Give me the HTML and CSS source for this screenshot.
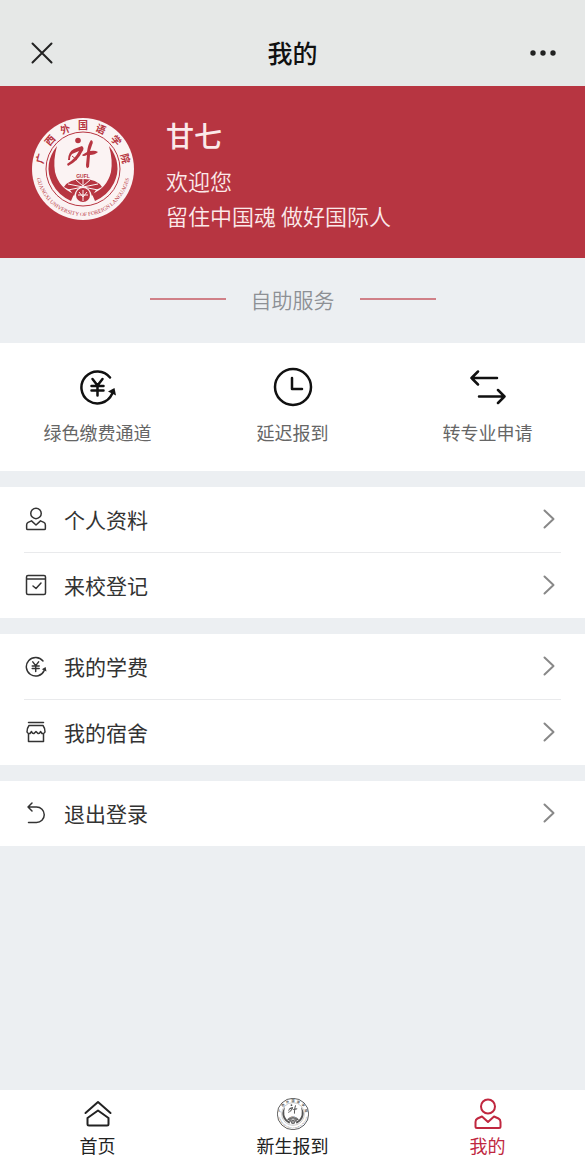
FILE: index.html
```html
<!DOCTYPE html>
<html lang="zh-CN">
<head>
<meta charset="utf-8">
<meta name="viewport" content="width=device-width, initial-scale=1">
<title>我的</title>
<link rel="stylesheet" href="styles.css">
</head>
<body>
<svg class="sprite" aria-hidden="true">
  <symbol id="person" viewBox="0 0 28 32">
    <circle cx="14" cy="8.500" r="7"/>
    <path d="M8 18.500L3.500 20.500Q1.500 21.500 1.500 24V28.500Q1.500 30 3 30H25Q26.500 30 26.500 28.500V24Q26.500 21.500 24.500 20.500L20 18.500L14 24Z"/>
  </symbol>
  <symbol id="yuan" viewBox="0 0 36 36">
    <path d="M30 8.500A16 16 0 1 0 32 25"/>
    <path d="M12.500 10L17.500 16.500L22.500 10M17.500 16.500V26.500M11.500 17H23.500M11.500 21.500H23.500"/>
    <path class="solid" d="M28 22.500L34.500 19L36 26.500Z"/>
  </symbol>
  <symbol id="chevron" viewBox="0 0 12 20"><path d="M1.500 1.500L10.500 10L1.500 18.500"/></symbol>
</svg>

<header class="topbar">
  <button class="topbar-button" type="button" aria-label="关闭">
    <svg class="icon close-icon" viewBox="0 0 22 22"><path d="M1.500 1.500L20.500 20.500M20.500 1.500L1.500 20.500"/></svg>
  </button>
  <h1 class="topbar-title">我的</h1>
  <button class="topbar-button topbar-more" type="button" aria-label="更多">
    <svg class="more-icon" viewBox="0 0 28 8"><circle cx="4" cy="4" r="2.700"/><circle cx="14" cy="4" r="2.700"/><circle cx="24" cy="4" r="2.700"/></svg>
  </button>
</header>

<main class="content">
  <section class="profile">
    <svg class="profile-emblem" viewBox="0 0 104 104" role="img" aria-label="校徽">
      <g id="emblem">
        <circle class="emblem-disc" cx="52" cy="52" r="51"/>
        <circle class="emblem-line" cx="52" cy="52" r="37"/>
        <g class="emblem-name">
          <text x="52" y="12" transform="rotate(-76 52 52)">广</text>
          <text x="52" y="12" transform="rotate(-49 52 52)">西</text>
          <text x="52" y="12" transform="rotate(-24 52 52)">外</text>
          <text x="52" y="12">国</text>
          <text x="52" y="12" transform="rotate(24 52 52)">语</text>
          <text x="52" y="12" transform="rotate(49 52 52)">学</text>
          <text x="52" y="12" transform="rotate(76 52 52)">院</text>
        </g>
        <path id="ring" fill="none" d="M5 52A47 47 0 0 0 99 52"/>
        <text class="emblem-latin"><textPath href="#ring" startOffset="50%">GUANGXI UNIVERSITY OF FOREIGN LANGUAGES</textPath></text>
        <g fill="currentColor">
          <path d="M26 29Q12 47 21 66Q27 78 40 84L43 77Q28 71 24 55Q22 43 26 29Z"/>
          <path d="M78 29Q92 47 83 66Q77 78 64 84L61 77Q76 71 80 55Q82 43 78 29Z"/>
          <circle cx="47" cy="23.500" r="2.800"/>
          <path d="M33 70Q38 62 52 62Q66 62 71 70L65 73L61 79Q59 70 52 70Q45 70 43 79L39 73Z"/>
          <circle cx="52" cy="78" r="7"/>
          <path d="M37 43Q37 35 43 32L51 29Q54 31 51 35Q47 44 37 49L36 47Q44 42 48 34L41 37Q39 39 39 43Z"/>
          <path d="M60 23Q63 24 61 28L59 34Q64 33 67 35Q64 38 59 38L58 50Q55 53 55 48L56 38Q52 40 51 38L56 35Q57 27 60 23Z"/>
        </g>
        <path class="emblem-line" d="M41 39L46 43"/>
        <path class="emblem-cut" d="M37 67L67 73M67 67L37 73M45 63L52 69L59 63M52 62V70M47 78H57M52 73V84M48 75L52 80L56 75"/>
        <text class="emblem-abbr" x="52" y="61">GUFL</text>
      </g>
    </svg>
    <div class="profile-text">
      <h2 class="profile-name">甘七</h2>
      <p class="profile-line">欢迎您</p>
      <p class="profile-line">留住中国魂 做好国际人</p>
    </div>
  </section>

  <h2 class="section-title">自助服务</h2>

  <nav class="services" aria-label="自助服务">
    <a class="service" href="#green">
      <svg class="icon service-icon"><use href="#yuan"/></svg>
      <span>绿色缴费通道</span>
    </a>
    <a class="service" href="#delay">
      <svg class="icon service-icon service-clock" viewBox="0 0 40 40"><circle cx="20" cy="20" r="18"/><path d="M19 11V22H29"/></svg>
      <span>延迟报到</span>
    </a>
    <a class="service" href="#transfer">
      <svg class="icon service-icon service-swap" viewBox="0 0 36 36"><path d="M27 9H1.500M8 2.500L1.500 9L8 15.500M9 27.500H34.500M28 21L34.500 27.500L28 34"/></svg>
      <span>转专业申请</span>
    </a>
  </nav>

  <nav class="group" aria-label="资料">
    <a class="row" href="#info">
      <svg class="icon row-icon row-person"><use href="#person"/></svg>
      <span class="row-label">个人资料</span>
      <svg class="icon chevron"><use href="#chevron"/></svg>
    </a>
    <a class="row" href="#register">
      <svg class="icon row-icon" viewBox="0 0 24 24"><rect x="2.500" y="2.500" width="19" height="19" rx="1.500"/><path d="M3 6H21M9 13L12 15.500L17 10"/></svg>
      <span class="row-label">来校登记</span>
      <svg class="icon chevron"><use href="#chevron"/></svg>
    </a>
  </nav>

  <nav class="group" aria-label="费用与宿舍">
    <a class="row" href="#tuition">
      <svg class="icon row-icon row-yuan"><use href="#yuan"/></svg>
      <span class="row-label">我的学费</span>
      <svg class="icon chevron"><use href="#chevron"/></svg>
    </a>
    <a class="row" href="#dorm">
      <svg class="icon row-icon" viewBox="0 0 24 24"><path d="M4.500 2.500H19.500M5 5.500H19Q21 8 21 12Q20 14 18 13.500L16.500 11.500Q15.500 14 14 13.500L12 11.500L10 13.500Q8.500 14 7.500 11.500L6 13.500Q4 14 3 12Q3 8 5 5.500ZM4.500 13.500V21.500H19.500V13.500"/></svg>
      <span class="row-label">我的宿舍</span>
      <svg class="icon chevron"><use href="#chevron"/></svg>
    </a>
  </nav>

  <nav class="group" aria-label="账号">
    <a class="row" href="#logout">
      <svg class="icon row-icon" viewBox="0 0 24 24"><path d="M8 2L4 6L8 10M4 6H12.500A7.700 7.700 0 0 1 12.500 21.500H4.500"/></svg>
      <span class="row-label">退出登录</span>
      <svg class="icon chevron"><use href="#chevron"/></svg>
    </a>
  </nav>
</main>

<nav class="tabs" aria-label="主导航">
  <a class="tab" href="#home">
    <svg class="icon tab-icon" viewBox="0 0 32 32"><path d="M3.500 15L16 4L28.500 15"/><path d="M5.500 20L16 12.500L26.500 20V26Q26.500 27.500 25 27.500H7Q5.500 27.500 5.500 26Z"/></svg>
    <span>首页</span>
  </a>
  <a class="tab" href="#freshman">
    <svg class="tab-icon tab-emblem" viewBox="0 0 104 104"><use href="#emblem"/></svg>
    <span>新生报到</span>
  </a>
  <a class="tab tab-active" href="#me" aria-current="page">
    <svg class="icon tab-icon"><use href="#person"/></svg>
    <span>我的</span>
  </a>
</nav>
</body>
</html>
```

FILE: styles.css
```css
* {
  box-sizing: border-box;
}

body {
  margin: 0;
  min-height: 100vh;
  display: flex;
  flex-direction: column;
  background: #eceff2;
  color: #333;
  font-family: "Noto Sans CJK SC", sans-serif;
}

a {
  color: inherit;
  text-decoration: none;
}

h1, h2, p {
  margin: 0;
}

.sprite {
  position: absolute;
  width: 0;
  height: 0;
}

.icon {
  fill: none;
  stroke: currentColor;
  stroke-linecap: round;
  stroke-linejoin: round;
}

.solid {
  fill: currentColor;
  stroke: none;
}

/* Top bar */
.topbar {
  display: flex;
  align-items: center;
  justify-content: space-between;
  padding: 32px 27px 14px;
  background: #e6e8e7;
  color: #111;
}

.topbar-button {
  display: flex;
  width: 30px;
  height: 40px;
  padding: 2px 0 0;
  border: 0;
  background: none;
  color: #222;
  align-items: center;
  justify-content: center;
}

.close-icon {
  width: 22px;
  height: 22px;
  stroke-width: 2;
}

.more-icon {
  width: 28px;
  height: 8px;
  fill: currentColor;
}

.topbar-title {
  font-size: 25px;
  line-height: 40px;
  font-weight: 500;
}

/* Profile banner */
.profile {
  display: flex;
  align-items: flex-start;
  gap: 31px;
  padding: 31px 31px 25px;
  background: #b73541;
  color: #fbe9ea;
}

.profile-emblem {
  flex: none;
  width: 104px;
  height: 104px;
  color: #b73541;
  --disc: #fbf3f3;
}

.profile-name {
  margin-bottom: 10px;
  font-size: 28px;
  line-height: 36px;
  font-weight: 500;
}

.profile-line {
  font-size: 22px;
  line-height: 35px;
  font-weight: 350;
}

.emblem-disc {
  fill: var(--disc);
  stroke: var(--rim, none);
  stroke-width: 3;
}

.emblem-line {
  fill: none;
  stroke: currentColor;
  stroke-width: 1;
}

.emblem-cut {
  fill: none;
  stroke: var(--disc);
  stroke-width: 1;
}

.emblem-name {
  fill: currentColor;
  font-size: 10px;
  font-weight: 700;
  text-anchor: middle;
}

.emblem-latin {
  fill: currentColor;
  font-family: "Liberation Serif", serif;
  font-size: 5.5px;
  text-anchor: middle;
}

.emblem-abbr {
  fill: currentColor;
  font-family: "Liberation Sans", sans-serif;
  font-size: 5px;
  font-weight: 700;
  text-anchor: middle;
}

/* Section heading with side rules */
.section-title {
  display: flex;
  align-items: center;
  justify-content: center;
  gap: 25px;
  padding: 25px 0 28px;
  color: #8d9095;
  font-size: 21px;
  line-height: 32px;
  font-weight: 350;
}

.section-title::before,
.section-title::after {
  content: "";
  width: 76px;
  height: 2px;
  background: #d08088;
}

/* Service shortcuts */
.services {
  display: grid;
  grid-template-columns: repeat(3, 1fr);
  padding: 24px 0 26px;
  background: #fff;
}

.service {
  display: flex;
  flex-direction: column;
  align-items: center;
  gap: 12px;
  color: #666;
  font-size: 18px;
  line-height: 26px;
}

.service-icon {
  width: 36px;
  height: 40px;
  color: #111;
  stroke-width: 2.5;
}

.service-clock {
  width: 40px;
}

/* Menu groups */
.group {
  margin-top: 16px;
  padding: 0 24px;
  background: #fff;
}

.row {
  display: flex;
  align-items: center;
  gap: 16px;
  padding: 16px 6px 17px 0;
}

.row + .row {
  border-top: 1px solid #e9eaec;
}

.row-icon {
  flex: none;
  width: 24px;
  height: 24px;
  stroke-width: 1.5;
}

.row-person {
  stroke-width: 2;
}

.row-yuan {
  height: 21px;
  stroke-width: 2.5;
}

.row-label {
  flex: 1;
  font-size: 21px;
  line-height: 32px;
}

.chevron {
  width: 12px;
  height: 20px;
  color: #888;
  stroke-width: 2;
}

/* Bottom tabs */
.tabs {
  display: grid;
  grid-template-columns: repeat(3, 1fr);
  margin-top: auto;
  padding: 8px 0 4px;
  background: #fff;
  color: #222;
}

.tab {
  display: flex;
  flex-direction: column;
  align-items: center;
  gap: 2px;
  font-size: 18px;
  line-height: 26px;
}

.tab-icon {
  width: 32px;
  height: 32px;
  stroke-width: 2;
}

.tab-emblem {
  color: #555;
  --disc: #fff;
  --rim: #555;
  stroke-width: 0;
}

.tab-active {
  color: #c0273f;
}
```
